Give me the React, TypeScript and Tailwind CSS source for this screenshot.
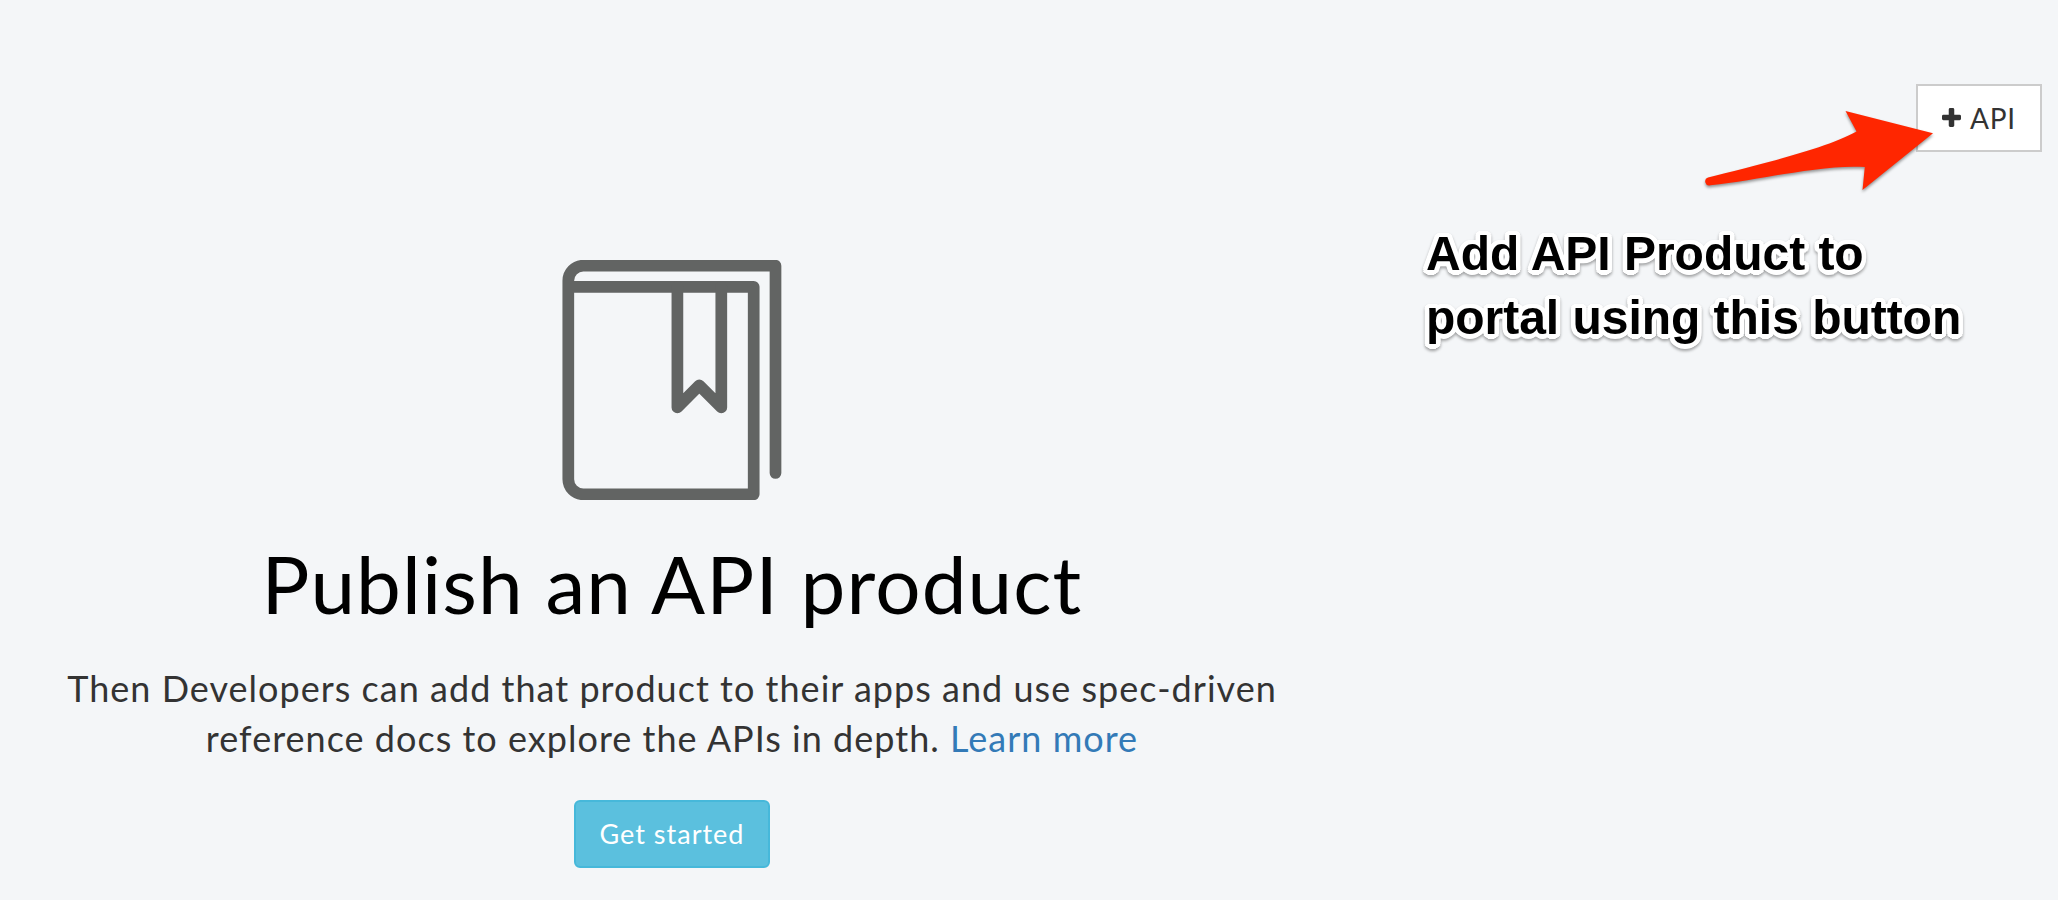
function BookIcon() {
  return (
    <svg className="h-[240px] w-[220px] overflow-hidden" viewBox="0 0 220 240" fill="none" stroke="#626463" strokeWidth="11.7" strokeLinecap="round" strokeLinejoin="round">
      <path d="M213.5 213V5.7H21.3a15 15 0 0 0-15 15V219.3a15 15 0 0 0 15 15H191.7V26.8H6.3" />
      <path d="M115.4 26.8V147.4L137.3 125.3L159.3 147.4V26.8" />
    </svg>
  );
}

function Arrow() {
  return (
    <svg className="absolute left-[1696px] top-[100px] h-[100px] w-[250px] drop-shadow-[0_2px_1.5px_rgba(0,0,0,0.4)]" viewBox="1696 100 250 100" fill="#ff2600">
      <path d="M1708 177.6C1748 167 1822 150.500 1856.500 131.500L1845.500 111L1933 133.300L1862.500 190L1864.800 167C1822 164 1760 180 1710.500 185.200A3.900 3.900 0 0 1 1708 177.600Z" />
    </svg>
  );
}

export default function App() {
  return (
    <div className="relative flex h-[900px] w-[2058px] overflow-hidden bg-[#f4f6f8] font-['Lato',sans-serif] tracking-[1px] text-[#333333]">
      <main className="flex w-[1344px] flex-col items-center pt-[260px] text-center">
        <BookIcon />
        <h1 className="mt-[39px] text-[80px] leading-[88px] tracking-[1.12px] text-black">Publish an API product</h1>
        <p className="mt-[36px] text-[36px] leading-[50px] tracking-[1.02px] whitespace-nowrap">
          Then Developers can add that product to their apps and use spec-driven
          <br />
          reference docs to explore the APIs in depth. <a className="text-[#337ab7]">Learn more</a>
        </p>
        <button className="mt-[37px] h-[68px] w-[196px] shrink-0 rounded-[6px] border-2 border-[#46b8da] bg-[#5bc0de] pb-px text-[27px] leading-[40px] tracking-[1px] whitespace-nowrap text-white">
          Get started
        </button>
      </main>
      <aside className="flex flex-1 flex-col pt-[84px]">
        <button className="mr-[16px] flex h-[68px] w-[126px] items-center gap-[9px] self-end border-2 border-[#cccccc] bg-white pb-px pl-[24px] text-[28px] leading-[40px] tracking-[0.8px]">
          <svg className="h-[19px] w-[19px]" viewBox="0 0 20 20" fill="#333333">
            <path d="M8.600 0h2.800q1.500 0 1.500 1.500v5.600h5.600q1.500 0 1.500 1.500v2.800q0 1.500-1.500 1.500h-5.600v5.600q0 1.500-1.500 1.500h-2.800q-1.500 0-1.500-1.500v-5.600h-5.600q-1.500 0-1.500-1.500v-2.800q0-1.500 1.500-1.500h5.600v-5.600q0-1.500 1.500-1.500z" />
          </svg>
          API
        </button>
        <p className="mt-[70px] ml-[82px] font-['Liberation_Sans',sans-serif] text-[48px] leading-[64px] font-bold tracking-[-0.03px] whitespace-nowrap text-black [text-shadow:4.5px_0_#fff,4.2px_1.7px_#fff,3.2px_3.2px_#fff,1.7px_4.2px_#fff,0_4.5px_#fff,-1.7px_4.2px_#fff,-3.2px_3.2px_#fff,-4.2px_1.7px_#fff,-4.5px_0_#fff,-4.2px_-1.7px_#fff,-3.2px_-3.2px_#fff,-1.7px_-4.2px_#fff,0_-4.5px_#fff,1.7px_-4.2px_#fff,3.2px_-3.2px_#fff,4.2px_-1.7px_#fff] drop-shadow-[0_2px_1.5px_rgba(0,0,0,0.35)]">
          Add API Product to
          <br />
          portal using this button
        </p>
      </aside>
      <Arrow />
    </div>
  );
}
